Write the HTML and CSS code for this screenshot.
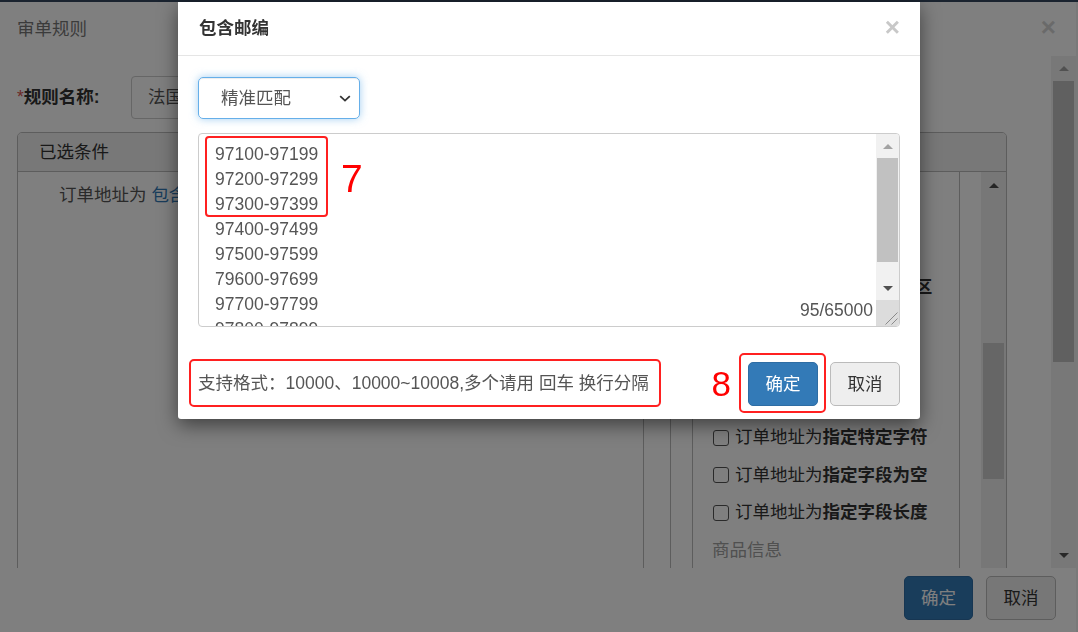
FILE: index.html
```html
<!DOCTYPE html>
<html lang="zh-CN">
<head>
<meta charset="utf-8">
<title>包含邮编</title>
<link rel="stylesheet" href="styles.css">
</head>
<body>
<div class="topbar"></div>

<!-- 审单规则 弹窗（底层） -->
<div class="dialog">
	<div class="dialog-header">
		<span class="dialog-title">审单规则</span>
		<span class="close">×</span>
	</div>
	<div class="dialog-main">
		<div class="dialog-body">
			<div class="form-row">
				<label class="form-label"><em>*</em>规则名称:</label>
				<div class="form-input">法国海外省邮编规则</div>
			</div>
			<div class="panel">
				<div class="panel-heading">已选条件</div>
				<div class="panel-body">
					<div class="selected-col">
						<p class="selected-item">订单地址为 <a href="javascript:void(0);">包含邮编</a>：97100-97199</p>
					</div>
					<div class="option-col">
						<ul class="option-list">
							<li class="opt-group">地址信息</li>
							<li class="opt-row"><span class="chk"></span>订单地址为<b>指定国家</b></li>
							<li class="opt-row"><span class="chk"></span>订单地址为<b>指定国家/地区</b></li>
							<li class="opt-row"><span class="chk"></span>订单地址为<b>包含邮编</b></li>
							<li class="opt-row"><span class="chk"></span>订单地址为<b>指定城市</b></li>
							<li class="opt-row"><span class="chk"></span>订单地址为<b>指定州省</b></li>
							<li class="opt-row"><span class="chk"></span>订单地址为<b>指定特定字符</b></li>
							<li class="opt-row"><span class="chk"></span>订单地址为<b>指定字段为空</b></li>
							<li class="opt-row"><span class="chk"></span>订单地址为<b>指定字段长度</b></li>
							<li class="opt-group">商品信息</li>
						</ul>
						<div class="vscroll panel-scroll">
							<span class="sb-btn"><i class="arr-up dark"></i></span>
							<span class="sb-thumb"></span>
						</div>
					</div>
				</div>
			</div>
		</div>
		<div class="vscroll outer-scroll">
			<span class="sb-btn"><i class="arr-up"></i></span>
			<span class="sb-thumb"></span>
			<span class="sb-fill"></span>
			<span class="sb-btn"><i class="arr-down dark"></i></span>
		</div>
	</div>
	<div class="dialog-footer">
		<a class="btn btn-primary" href="javascript:void(0);">确定</a>
		<a class="btn btn-default" href="javascript:void(0);">取消</a>
	</div>
</div>

<div class="backdrop"></div>

<!-- 包含邮编 弹窗 -->
<div class="modal">
	<div class="modal-header">
		<span class="modal-title">包含邮编</span>
		<span class="modal-close">×</span>
	</div>
	<div class="modal-body">
		<div class="select">
			<span>精准匹配</span>
			<svg width="12" height="7" viewBox="0 0 12 7"><path d="M1.2 1.2 L6 5.6 L10.8 1.2" fill="none" stroke="#333" stroke-width="1.8"/></svg>
		</div>
		<div class="zip-box">
			<div class="zip-lines">
				<div>97100-97199</div>
				<div>97200-97299</div>
				<div>97300-97399</div>
				<div>97400-97499</div>
				<div>97500-97599</div>
				<div>79600-97699</div>
				<div>97700-97799</div>
				<div>97800-97899</div>
				<span class="mark-box"></span>
				<span class="mark-num num-7">7</span>
			</div>
			<div class="vscroll zip-scroll">
				<span class="sb-btn"><i class="arr-up"></i></span>
				<span class="sb-thumb"></span>
				<span class="sb-fill"></span>
				<span class="sb-btn"><i class="arr-down dark"></i></span>
				<span class="sb-corner"><svg width="23" height="26" viewBox="0 0 23 26"><path d="M21.5 12.5 L9.5 24.5 M21.5 18.5 L15.5 24.5" stroke="#8a8a8a" stroke-width="1"/></svg></span>
			</div>
			<span class="zip-count">95/65000</span>
		</div>
	</div>
	<div class="modal-footer">
		<div class="hint-box">支持格式：10000、10000~10008,多个请用 回车 换行分隔</div>
		<span class="mark-num num-8">8</span>
		<div class="mark-wrap"><a class="btn btn-primary" href="javascript:void(0);">确定</a></div>
		<a class="btn btn-default btn-cancel" href="javascript:void(0);">取消</a>
	</div>
</div>
</body>
</html>
```

FILE: styles.css
```css
*{box-sizing:border-box;}
html,body{margin:0;height:100%;}
body{position:relative;overflow:hidden;background:#f3f3f3;font:17.5px/25px "Liberation Sans","Noto Sans CJK SC",sans-serif;color:#333;}
ul,li,p{margin:0;padding:0;list-style:none;}
a{text-decoration:none;}
.topbar{height:2px;background:#34465e;}

/* 底层弹窗 */
.dialog{position:absolute;top:2px;left:0;bottom:0;width:1076px;background:#fff;display:flex;flex-direction:column;}
.dialog-header{flex:none;height:54px;display:flex;align-items:center;justify-content:space-between;padding:0 20px 0 17px;}
.dialog-title{color:#777;}
.close{font-size:26px;font-weight:bold;line-height:1;color:#d5d5d5;margin-bottom:4px;}
.dialog-main{flex:none;height:512px;display:flex;}
.dialog-body{flex:1;overflow:hidden;padding:20px 0 0 17px;}
.form-row{display:flex;align-items:center;height:43px;}
.form-label{width:114px;font-weight:bold;color:#333;}
.form-label em{font-style:normal;font-weight:normal;color:#d9534f;}
.form-input{width:400px;height:43px;border:1px solid #ccc;border-radius:4px;padding:0 16px;line-height:41px;color:#555;}
.panel{margin-top:13px;width:990px;border:1px solid #bbb;border-radius:5px 5px 0 0;}
.panel-heading{height:39px;line-height:38px;padding-left:21px;background:#f0f0f0;border-bottom:1px solid #bbb;border-radius:4px 4px 0 0;}
.panel-body{display:flex;height:420px;}
.selected-col{width:626px;flex:none;border-right:1px solid #bbb;padding:11px 20px 0 41px;color:#555;white-space:nowrap;overflow:hidden;}
.selected-item a{color:#337ab7;}
.option-col{flex:1;display:flex;margin-left:26px;border-left:1px solid #bbb;padding-left:21px;}
.option-list{width:268px;flex:none;border-left:1px solid #bbb;border-right:1px solid #bbb;padding:22px 0 0 20px;white-space:nowrap;}
.opt-row,.opt-group{height:37.5px;display:flex;align-items:center;}
.opt-group{color:#a0a0a0;margin-left:-1px;}
.chk{width:16px;height:16px;flex:none;border:1px solid #555;border-radius:3px;background:#fff;margin-right:6px;}
.opt-row b{font-weight:bold;color:#333;}

/* 滚动条 */
.vscroll{display:flex;flex-direction:column;flex:none;background:#f1f1f1;}
.sb-btn{display:flex;align-items:center;justify-content:center;flex:none;}
.sb-thumb{flex:none;background:#c1c1c1;margin:0 2px;}
.sb-fill{flex:1;}
.arr-up,.arr-down{width:0;height:0;border-left:5.5px solid transparent;border-right:5.5px solid transparent;}
.arr-up{border-bottom:5px solid #a3a3a3;}
.arr-down{border-top:5px solid #a3a3a3;}
.arr-up.dark{border-bottom-color:#4a4a4a;}
.arr-down.dark{border-top-color:#505050;}
.outer-scroll{width:25px;}
.outer-scroll .sb-btn{height:25px;}
.outer-scroll .sb-thumb{height:281px;}
.panel-scroll{width:25px;margin-left:21px;background:#eee;}
.panel-scroll .sb-btn{height:26px;}
.panel-scroll .sb-thumb{height:136px;margin:145px 2px 0 2px;background:#ccc;}
.dialog-footer{flex:none;display:flex;justify-content:flex-end;padding:8px 20px 0 0;gap:13px;}

.btn{height:44px;display:flex;align-items:center;justify-content:center;border:1px solid;border-radius:5px;font-size:17.5px;}
.btn-primary{width:69px;background:#337ab7;border-color:#2e6da4;color:#fff;}
.btn-default{width:70px;background:#eee;border-color:#bbb;color:#333;}

.backdrop{position:fixed;left:0;top:0;right:0;bottom:0;background:rgba(0,0,0,.5);}

/* 包含邮编 弹窗 */
.modal{position:absolute;top:2px;left:178px;width:742px;background:#fff;box-shadow:0 6px 19px rgba(0,0,0,.5);border-radius:0 0 3px 3px;}
.modal-header{height:54px;display:flex;align-items:center;justify-content:space-between;padding:0 20px 0 21px;border-bottom:1px solid #e5e5e5;}
.modal-title{font-weight:bold;color:#333;}
.modal-close{font-size:26px;font-weight:bold;line-height:1;color:#c8c8c8;margin-bottom:4px;}
.modal-body{padding:21px 20px 20px 20px;}
.select{width:162px;height:42px;display:flex;align-items:center;justify-content:space-between;padding:0 8px 0 22px;border:1px solid #66afe9;border-radius:5px;box-shadow:inset 0 1px 1px rgba(0,0,0,.075),0 0 9px rgba(102,175,233,.6);color:#555;}
.select svg{display:block;}
.zip-box{position:relative;margin-top:14px;height:194px;display:flex;border:1px solid #ccc;border-radius:4px;overflow:hidden;}
.zip-lines{position:relative;flex:1;overflow:hidden;padding:8px 0 0 16px;color:#555;}
.zip-scroll{width:23px;}
.zip-scroll .sb-btn{height:24px;}
.zip-scroll .sb-thumb{height:104px;margin:0 1px;}
.zip-scroll .sb-corner{flex:none;height:26px;background:#dcdcdc;}
.zip-scroll .sb-corner svg{display:block;}
.zip-count{position:absolute;right:26px;bottom:3px;color:#555;}
.mark-box{position:absolute;left:6px;top:2px;width:123px;height:81px;border:2px solid #ff2020;border-radius:4px;}
.mark-num{color:#f00;line-height:1;font-family:"Liberation Sans",sans-serif;}
.num-7{position:absolute;left:142px;top:25px;font-size:39px;}
.num-8{font-size:35px;margin-left:auto;margin-right:8px;}
.modal-footer{height:72px;display:flex;align-items:center;padding:0 20px 0 11px;}
.hint-box{width:472px;height:48px;display:flex;align-items:center;padding-left:7px;border:2px solid #ff2020;border-radius:5px;color:#555;white-space:nowrap;}
.mark-wrap{padding:7px 6px 5px 7px;border:2px solid #ff2020;border-radius:5px;}
.mark-wrap .btn-primary{width:70px;}
.btn-cancel{margin-left:4px;margin-top:2px;}
```
